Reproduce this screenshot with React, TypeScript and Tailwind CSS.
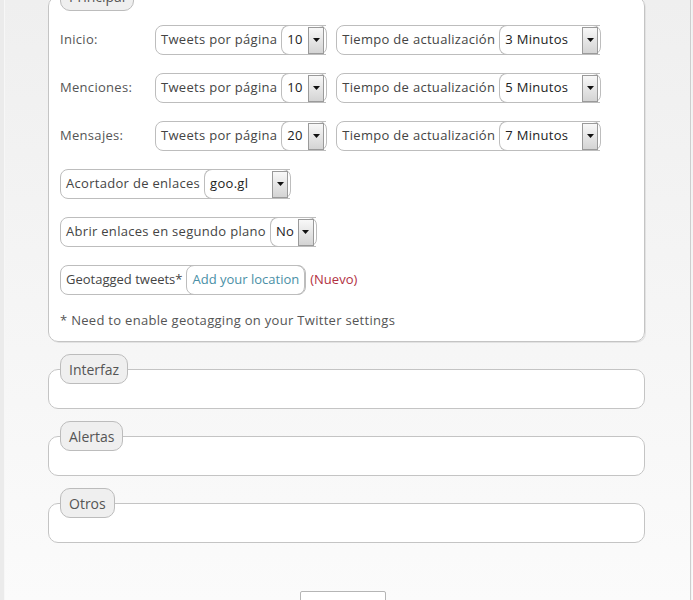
import React from 'react';

const font = { fontFamily: '"Open Sans", "Noto Sans", sans-serif' };

const Arrow = () => (
  <div className="mr-[2px] flex h-[27px] w-[16px] shrink-0 items-center justify-center border border-[#9a9a9a] bg-gradient-to-b from-[#f8f8f8] to-[#d4d4d4]">
    <svg width="7" height="4" viewBox="0 0 7 4">
      <path d="M0 0h7L3.5 4z" fill="#111" />
    </svg>
  </div>
);

const Select = ({ value, width }: { value: string; width: string }) => (
  <div className={`-my-px flex items-center self-stretch rounded-l-[8px] border border-r-0 border-[#bdbdbd] pl-[5px] ${width}`}>
    <span className="flex-1 text-[#222]">{value}</span>
    <Arrow />
  </div>
);

const Group = ({ label, value, width }: { label: string; value: string; width: string }) => (
  <div className="flex h-[30px] items-center rounded-[8px] border border-[#bdbdbd] bg-white">
    <span className="pl-[5px] pr-[4px] text-[#444]">{label}</span>
    <Select value={value} width={width} />
  </div>
);

const Legend = ({ children }: { children: React.ReactNode }) => (
  <legend className="flex h-[30px] items-center rounded-[10px] border border-[#bcbcbc] bg-[#efefef] px-[8px] text-[14px] tracking-normal text-[#555]">
    {children}
  </legend>
);

const EmptySection = ({ title }: { title: string }) => (
  <fieldset className="mt-[12px] rounded-[10px] border border-[#c4c4c4] bg-white px-[11px]">
    <Legend>{title}</Legend>
    <div className="h-[24px]" />
  </fieldset>
);

const feeds = [
  { label: 'Inicio:', tweets: '10', refresh: '3 Minutos' },
  { label: 'Menciones:', tweets: '10', refresh: '5 Minutos' },
  { label: 'Mensajes:', tweets: '20', refresh: '7 Minutos' },
];

export default function App() {
  return (
    <div
      className="flex h-[600px] w-[693px] overflow-hidden bg-gradient-to-b from-[#efefef] to-[#fbfbfb] text-[13px] tracking-[0.3px]"
      style={font}
    >
      <div className="w-[5px] shrink-0 border-r border-[#f7f7f7] bg-[#ebebeb]" />
      <div className="w-[685px] shrink-0">
        <div className="-mt-[19px] ml-[43px] w-[597px]">
          <fieldset className="rounded-[10px] border border-[#c4c4c4] bg-white px-[11px] pb-[12px] shadow-[1px_1px_0_#e2e2e2]">
            <Legend>Principal</Legend>
            <div className="flex flex-col gap-[18px] pt-[14px]">
              {feeds.map((f) => (
                <div key={f.label} className="flex items-center">
                  <span className="w-[95px] text-[#555]">{f.label}</span>
                  <Group label="Tweets por página" value={f.tweets} width="w-[45px]" />
                  <div className="ml-[9px]">
                    <Group label="Tiempo de actualización" value={f.refresh} width="w-[101px]" />
                  </div>
                </div>
              ))}
              <div className="flex">
                <Group label="Acortador de enlaces" value="goo.gl" width="w-[86px]" />
              </div>
              <div className="flex">
                <Group label="Abrir enlaces en segundo plano" value="No" width="w-[46px]" />
              </div>
              {/* geotagging row: label + location link, with a "new" marker */}
              <div className="flex items-center tracking-normal">
                <div className="flex h-[30px] items-center rounded-[8px] border border-[#bdbdbd]">
                  <span className="pl-[5px] pr-[4px] text-[#444]">Geotagged tweets*</span>
                  <div className="-my-px flex items-center self-stretch rounded-[8px] border border-[#bdbdbd] px-[5px] text-[#4a8fa6]">
                    Add your location
                  </div>
                </div>
                <span className="ml-[4px] text-[#b2303f]">(Nuevo)</span>
              </div>
            </div>
            <p className="mt-[16px] leading-[18px] text-[#555]">
              * Need to enable geotagging on your Twitter settings
            </p>
          </fieldset>

          <EmptySection title="Interfaz" />
          <EmptySection title="Alertas" />
          <EmptySection title="Otros" />

          <div className="mt-[48px] flex justify-center pr-[7px]">
            <button className="w-[86px] rounded-[2px] border border-[#b5b5b5] bg-white pb-[4px] pt-[24px] text-[#444]">
              Guardar
            </button>
          </div>
        </div>
      </div>
      <div className="w-px shrink-0 bg-[#cdcdcd]" />
      <div className="w-px shrink-0 bg-[#f4f4f4]" />
    </div>
  );
}
